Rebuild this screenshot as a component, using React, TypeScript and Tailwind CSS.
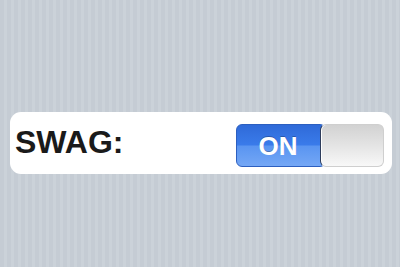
export default function App() {
  return (
    <div
      className="w-[400px] h-[267px] overflow-hidden pt-[112px] bg-[#c5ccd4] bg-[repeating-linear-gradient(90deg,#c5ccd4_0px,#c5ccd4_4px,#cbd2d9_4px,#cbd2d9_7px)]"
      style={{ fontFamily: '"Liberation Sans", Arial, Helvetica, sans-serif' }}
    >
      <div className="ml-[10px] w-[382px] h-[62px] bg-white rounded-[11px] flex items-start">
        <span className="mt-[14px] ml-[5px] text-[32px] leading-none font-bold text-[#1a1a1a]">
          SWAG:
        </span>
        <div className="ml-auto mr-[8px] mt-[12px] w-[148px] h-[43px] flex relative">
          <div className="w-[90px] h-full rounded-[6px] pr-[6px] flex items-center justify-center border border-[#2c5fc0] bg-[linear-gradient(180deg,#2f6ad8_0%,#3a7bea_48%,#5a95f1_52%,#74a7f5_100%)]">
            <span className="text-white text-[26px] font-bold leading-none mt-[1px] [text-shadow:0_-1px_0_rgba(0,0,0,0.25)]">
              ON
            </span>
          </div>
          <div className="absolute right-0 top-0 w-[64px] h-full rounded-[6px] border border-[#cfcfcf] border-l-[#2e3d5c] bg-[linear-gradient(180deg,#d2d2d2_0%,#e4e4e4_50%,#f8f8f8_100%)] shadow-[inset_1px_0_0_#ffffff]" />
        </div>
      </div>
    </div>
  );
}
